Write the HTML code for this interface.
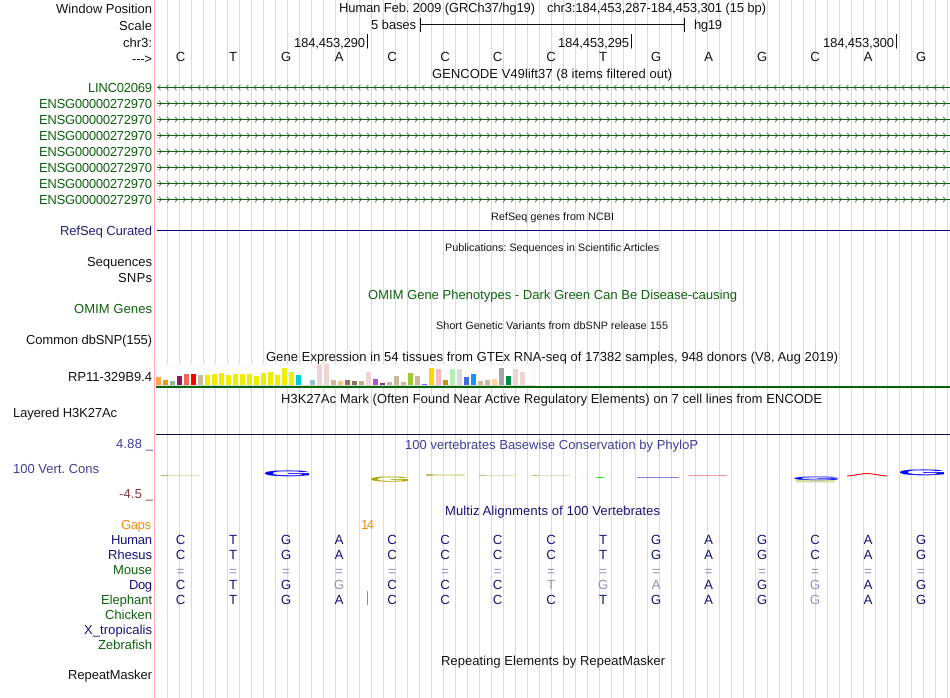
<!DOCTYPE html>
<html><head><meta charset="utf-8"><title>Genome Browser</title>
<style>
html,body{margin:0;padding:0;background:#fff;width:950px;height:698px;overflow:hidden}
svg{display:block}
text{font-family:"Liberation Sans",sans-serif;font-size:13px;fill:#111;text-rendering:geometricPrecision;filter:blur(.25px)}
.s{font-size:10.800px}
.g{fill:#0f620f}.n{fill:#10107a}.b{fill:#20207e}.p{fill:#40409a}
.bs{text-anchor:middle;font-size:13.200px}
.l{fill:#9292c2}
.eq{font-size:13.500px}
</style></head><body>
<svg width="950" height="698" viewBox="0 0 950 698" xmlns="http://www.w3.org/2000/svg">
<defs>
<pattern id="la" patternUnits="userSpaceOnUse" x="157" y="83" width="8" height="9"><path d="M3.500 1.800L1 4.500L3.500 7.200" fill="none" stroke="#0f640f" stroke-width=".8" opacity=".85"/></pattern>
<pattern id="ra" patternUnits="userSpaceOnUse" x="157" y="99" width="8" height="16"><path d="M2 1.800L4.500 4.500L2 7.200" fill="none" stroke="#0f640f" stroke-width=".8" opacity=".85"/></pattern>
</defs>
<rect width="950" height="698" fill="#fff"/>
<path d="M167.500 0V698M179.500 0V698M191.500 0V698M203.500 0V698M215.500 0V698M227.500 0V698M239.500 0V698M251.500 0V698M263.500 0V698M275.500 0V698M287.500 0V698M299.500 0V698M311.500 0V698M323.500 0V698M335.500 0V698M347.500 0V698M359.500 0V698M371.500 0V698M383.500 0V698M395.500 0V698M407.500 0V698M419.500 0V698M431.500 0V698M443.500 0V698M455.500 0V698M467.500 0V698M479.500 0V698M491.500 0V698M503.500 0V698M515.500 0V698M527.500 0V698M539.500 0V698M551.500 0V698M563.500 0V698M575.500 0V698M587.500 0V698M599.500 0V698M611.500 0V698M623.500 0V698M635.500 0V698M647.500 0V698M659.500 0V698M671.500 0V698M683.500 0V698M695.500 0V698M707.500 0V698M719.500 0V698M731.500 0V698M743.500 0V698M755.500 0V698M767.500 0V698M779.500 0V698M791.500 0V698M803.500 0V698M815.500 0V698M827.500 0V698M839.500 0V698M851.500 0V698M863.500 0V698M875.500 0V698M887.500 0V698M899.500 0V698M911.500 0V698M923.500 0V698M935.500 0V698M947.500 0V698" stroke="#d6d6fa" stroke-width="1" fill="none"/>
<rect x="154" y="0" width="1" height="698" fill="#ffaaaa"/>

<!-- header -->
<text x="56" y="13" textLength="96">Window Position</text>
<text x="119" y="30" textLength="33">Scale</text>
<text x="123" y="47" textLength="29">chr3:</text>
<text x="132" y="63" textLength="20">---&gt;</text>
<text x="339" y="12" textLength="196">Human Feb. 2009 (GRCh37/hg19)</text>
<text x="547" y="12" textLength="219">chr3:184,453,287-184,453,301 (15 bp)</text>
<text x="371" y="29" textLength="45">5 bases</text>
<text x="694" y="29" textLength="28">hg19</text>
<path d="M420.500 18V32M684.500 18V32M420 24.500H685" stroke="#111" stroke-width="1" fill="none"/>
<text x="294" y="47" textLength="71">184,453,290</text>
<text x="558" y="47" textLength="71">184,453,295</text>
<text x="823" y="47" textLength="71">184,453,300</text>
<path d="M367.500 34V48.500M631.500 34V48.500M896.500 34V48.500" stroke="#111" stroke-width="1"/>
<g>
<text class="bs" x="180.500" y="61">C</text><text class="bs" x="233" y="61">T</text><text class="bs" x="286" y="61">G</text><text class="bs" x="339" y="61">A</text><text class="bs" x="392" y="61">C</text><text class="bs" x="445" y="61">C</text><text class="bs" x="497.500" y="61">C</text><text class="bs" x="551" y="61">C</text><text class="bs" x="603" y="61">T</text><text class="bs" x="656" y="61">G</text><text class="bs" x="708.500" y="61">A</text><text class="bs" x="762" y="61">G</text><text class="bs" x="815" y="61">C</text><text class="bs" x="868" y="61">A</text><text class="bs" x="921" y="61">G</text>
</g>

<!-- GENCODE -->
<text x="432" y="78" textLength="240">GENCODE V49lift37 (8 items filtered out)</text>
<text class="g" x="88" y="92" textLength="64">LINC02069</text>
<text class="g" x="39" y="108" textLength="113">ENSG00000272970</text>
<text class="g" x="39" y="124" textLength="113">ENSG00000272970</text>
<text class="g" x="39" y="140" textLength="113">ENSG00000272970</text>
<text class="g" x="39" y="156" textLength="113">ENSG00000272970</text>
<text class="g" x="39" y="172" textLength="113">ENSG00000272970</text>
<text class="g" x="39" y="188" textLength="113">ENSG00000272970</text>
<text class="g" x="39" y="204" textLength="113">ENSG00000272970</text>
<rect x="157" y="83" width="793" height="9" fill="url(#la)"/>
<rect x="157" y="99" width="793" height="105" fill="url(#ra)"/>
<path d="M157 87.500H950M157 103.500H950M157 119.500H950M157 135.500H950M157 151.500H950M157 167.500H950M157 183.500H950M157 199.500H950" stroke="#0f640f" stroke-width="1"/>

<!-- middle -->
<text class="s" x="491" y="220" textLength="123">RefSeq genes from NCBI</text>
<text class="b" x="60" y="235" textLength="92">RefSeq Curated</text>
<rect x="157" y="230" width="793" height="1" fill="#000080"/>
<text class="s" x="445" y="251" textLength="214">Publications: Sequences in Scientific Articles</text>
<text x="87" y="266" textLength="65">Sequences</text>
<text x="118" y="282" textLength="34">SNPs</text>
<text class="g" x="368" y="299" textLength="369">OMIM Gene Phenotypes - Dark Green Can Be Disease-causing</text>
<text class="g" x="74" y="313" textLength="78">OMIM Genes</text>
<text class="s" x="436" y="329" textLength="232">Short Genetic Variants from dbSNP release 155</text>
<text x="26" y="344" textLength="126">Common dbSNP(155)</text>
<text x="266" y="361" textLength="572">Gene Expression in 54 tissues from GTEx RNA-seq of 17382 samples, 948 donors (V8, Aug 2019)</text>
<text x="68" y="381" textLength="84">RP11-329B9.4</text>

<!-- bars -->
<rect x="156.500" y="364.500" width="378" height="21" fill="#fff" stroke="#f5f5f5"/>
<rect x="156" y="385" width="379" height="1" fill="#d8d8d8"/>
<rect x="156" y="377" width="5" height="8" fill="#ffa54f"/><rect x="163" y="380" width="5" height="5" fill="#ee9a00"/><rect x="170" y="381" width="5" height="4" fill="#8fbc8f"/><rect x="177" y="376" width="5" height="9" fill="#8b1a62"/><rect x="184" y="374" width="5" height="11" fill="#ee6a50"/><rect x="191" y="374" width="5" height="11" fill="#ff0000"/><rect x="198" y="375" width="5" height="10" fill="#cdb79e"/>
<g fill="#eeee00"><rect x="205" y="375" width="5" height="10"/><rect x="212" y="374" width="5" height="11"/><rect x="219" y="373" width="5" height="12"/><rect x="226" y="375" width="5" height="10"/><rect x="233" y="374" width="5" height="11"/><rect x="240" y="374" width="5" height="11"/><rect x="247" y="374" width="5" height="11"/><rect x="254" y="376" width="5" height="9"/><rect x="261" y="373" width="5" height="12"/><rect x="268" y="372" width="5" height="13"/><rect x="275" y="375" width="5" height="10"/><rect x="282" y="368" width="5" height="17"/><rect x="289" y="372" width="5" height="13"/></g>
<rect x="296" y="375" width="5" height="10" fill="#00cdcd"/>
<rect x="310" y="380" width="5" height="5" fill="#9ac0cd"/><rect x="317" y="364" width="5" height="21" fill="#eed5d2"/><rect x="324" y="364" width="5" height="21" fill="#eed5d2"/><rect x="331" y="380" width="5" height="5" fill="#cdb79e"/><rect x="338" y="381" width="5" height="4" fill="#f4c28a"/><rect x="345" y="380" width="5" height="5" fill="#8b7355"/><rect x="352" y="381" width="5" height="4" fill="#8b7355"/><rect x="359" y="381" width="5" height="4" fill="#cdaa7d"/><rect x="366" y="372" width="5" height="13" fill="#eed5d2"/><rect x="373" y="379" width="5" height="6" fill="#b452cd"/><rect x="380" y="383" width="5" height="2" fill="#7a378b"/><rect x="387" y="382" width="5" height="3" fill="#cdb79e"/><rect x="394" y="376" width="5" height="9" fill="#cdb79e"/><rect x="401" y="382" width="5" height="3" fill="#cdb79e"/><rect x="408" y="373" width="5" height="12" fill="#9acd32"/><rect x="415" y="376" width="5" height="9" fill="#cdb79e"/><rect x="422" y="384" width="5" height="1" fill="#7a67ee"/><rect x="429" y="368" width="5" height="17" fill="#ffd700"/><rect x="436" y="369" width="5" height="16" fill="#ffb6c1"/><rect x="443" y="380" width="5" height="5" fill="#cd950c"/><rect x="450" y="369" width="5" height="16" fill="#b4eeb4"/><rect x="457" y="369" width="5" height="16" fill="#d9d9d9"/><rect x="464" y="377" width="5" height="8" fill="#4169e1"/><rect x="471" y="374" width="5" height="11" fill="#1e90ff"/><rect x="478" y="381" width="5" height="4" fill="#cdb79e"/><rect x="485" y="380" width="5" height="5" fill="#cdb79e"/><rect x="492" y="379" width="5" height="6" fill="#ffd39b"/><rect x="499" y="368" width="5" height="17" fill="#a6a6a6"/><rect x="506" y="376" width="5" height="9" fill="#008b45"/><rect x="513" y="369" width="5" height="16" fill="#eed5d2"/><rect x="520" y="372" width="5" height="13" fill="#eed5d2"/>
<rect x="156" y="386" width="794" height="2" fill="#006400"/>

<!-- H3K27Ac -->
<text x="281" y="403" textLength="541">H3K27Ac Mark (Often Found Near Active Regulatory Elements) on 7 cell lines from ENCODE</text>
<text x="13" y="417" textLength="104">Layered H3K27Ac</text>
<rect x="156" y="434" width="794" height="1" fill="#0a0a46"/>

<!-- conservation -->
<text class="p" x="116" y="448" textLength="37">4.88 _</text>
<text class="p" x="405" y="449" textLength="293">100 vertebrates Basewise Conservation by PhyloP</text>
<text class="p" x="13" y="473" textLength="86">100 Vert. Cons</text>
<text x="119" y="498" textLength="34" style="fill:#8b3a3a">-4.5 _</text>

<!-- logo faint strips -->
<g>
<rect x="161" y="475" width="38" height="1" fill="#dfdfb8"/><rect x="161" y="475" width="7" height="1" fill="#b5b560"/>
<rect x="426" y="474" width="39" height="2" fill="#e4e4b8"/><rect x="426" y="474" width="7" height="2" fill="#bcbc60"/>
<rect x="479" y="475" width="38" height="1" fill="#e2e2c0"/><rect x="479" y="475" width="7" height="1" fill="#bcbc70"/>
<rect x="532" y="475" width="39" height="1" fill="#e2e2c0"/><rect x="532" y="475" width="7" height="1" fill="#bcbc70"/>
<rect x="582" y="477" width="36" height="1" fill="#e6f8e6"/><rect x="597" y="477" width="6" height="1" fill="#00e000"/>
<rect x="637" y="477" width="42" height="1" fill="#8080e4"/>
<rect x="688" y="475" width="39" height="1" fill="#f29a9a"/>
<rect x="796" y="479.500" width="39" height="3" fill="#dcdca0"/>
<rect x="800" y="477" width="34" height="2" fill="#c0c8f4"/>
</g>
<!-- logo letters -->
<text transform="translate(262.600 476) scale(7.800 .95)" style="font-size:8.300px;fill:#0000ff;stroke:#0000ff;stroke-width:.25;filter:none">G</text>
<text transform="translate(369 481.300) scale(7.800 1)" style="font-size:7px;fill:#a8a800;stroke:#a8a800;stroke-width:.2;filter:none">G</text>
<text transform="translate(791.600 480) scale(7.800 .6)" style="font-size:8.300px;fill:#0000ff;stroke:#0000ff;stroke-width:.15;filter:none">G</text>
<path d="M847 476C857 475.500 860 473.500 867 473.500C874 473.500 877 475.500 887 476" fill="none" stroke="#ff0000" stroke-width="1"/>
<text transform="translate(897.600 475) scale(7.800 .95)" style="font-size:8.300px;fill:#0000ff;stroke:#0000ff;stroke-width:.25;filter:none">G</text>

<!-- multiz -->
<text class="n" x="445" y="515" textLength="215">Multiz Alignments of 100 Vertebrates</text>
<text x="121" y="529" textLength="30" style="fill:#ee8f10">Gaps</text>
<text x="361" y="529" textLength="13" style="fill:#ee8f10">14</text>
<text class="n" x="111" y="544" textLength="41">Human</text>
<text class="n" x="108" y="559" textLength="44">Rhesus</text>
<text class="g" x="113" y="574" textLength="39">Mouse</text>
<text class="n" x="129" y="589" textLength="23">Dog</text>
<text class="g" x="101" y="604" textLength="51">Elephant</text>
<text class="g" x="105" y="619" textLength="47">Chicken</text>
<text class="n" x="84" y="634" textLength="68">X_tropicalis</text>
<text class="g" x="98" y="649" textLength="54">Zebrafish</text>
<rect x="367" y="591" width="1" height="14" fill="#c8862a"/>

<g>
<text class="bs n" x="180.500" y="544">C</text><text class="bs n" x="233" y="544">T</text><text class="bs n" x="286" y="544">G</text><text class="bs n" x="339" y="544">A</text><text class="bs n" x="392" y="544">C</text><text class="bs n" x="445" y="544">C</text><text class="bs n" x="497.500" y="544">C</text><text class="bs n" x="551" y="544">C</text><text class="bs n" x="603" y="544">T</text><text class="bs n" x="656" y="544">G</text><text class="bs n" x="708.500" y="544">A</text><text class="bs n" x="762" y="544">G</text><text class="bs n" x="815" y="544">C</text><text class="bs n" x="868" y="544">A</text><text class="bs n" x="921" y="544">G</text>
<text class="bs n" x="180.500" y="559">C</text><text class="bs n" x="233" y="559">T</text><text class="bs n" x="286" y="559">G</text><text class="bs n" x="339" y="559">A</text><text class="bs n" x="392" y="559">C</text><text class="bs n" x="445" y="559">C</text><text class="bs n" x="497.500" y="559">C</text><text class="bs n" x="551" y="559">C</text><text class="bs n" x="603" y="559">T</text><text class="bs n" x="656" y="559">G</text><text class="bs n" x="708.500" y="559">A</text><text class="bs n" x="762" y="559">G</text><text class="bs n" x="815" y="559">C</text><text class="bs n" x="868" y="559">A</text><text class="bs n" x="921" y="559">G</text>
<text class="bs l eq" x="180.500" y="575.500">=</text><text class="bs l eq" x="233" y="575.500">=</text><text class="bs l eq" x="286" y="575.500">=</text><text class="bs l eq" x="339" y="575.500">=</text><text class="bs l eq" x="392" y="575.500">=</text><text class="bs l eq" x="445" y="575.500">=</text><text class="bs l eq" x="497.500" y="575.500">=</text><text class="bs l eq" x="551" y="575.500">=</text><text class="bs l eq" x="603" y="575.500">=</text><text class="bs l eq" x="656" y="575.500">=</text><text class="bs l eq" x="708.500" y="575.500">=</text><text class="bs l eq" x="762" y="575.500">=</text><text class="bs l eq" x="815" y="575.500">=</text><text class="bs l eq" x="868" y="575.500">=</text><text class="bs l eq" x="921" y="575.500">=</text>
<text class="bs n" x="180.500" y="589">C</text><text class="bs n" x="233" y="589">T</text><text class="bs n" x="286" y="589">G</text><text class="bs l" x="339" y="589">G</text><text class="bs n" x="392" y="589">C</text><text class="bs n" x="445" y="589">C</text><text class="bs n" x="497.500" y="589">C</text><text class="bs l" x="551" y="589">T</text><text class="bs l" x="603" y="589">G</text><text class="bs l" x="656" y="589">A</text><text class="bs n" x="708.500" y="589">A</text><text class="bs n" x="762" y="589">G</text><text class="bs l" x="815" y="589">G</text><text class="bs n" x="868" y="589">A</text><text class="bs n" x="921" y="589">G</text>
<text class="bs n" x="180.500" y="604">C</text><text class="bs n" x="233" y="604">T</text><text class="bs n" x="286" y="604">G</text><text class="bs n" x="339" y="604">A</text><text class="bs n" x="392" y="604">C</text><text class="bs n" x="445" y="604">C</text><text class="bs n" x="497.500" y="604">C</text><text class="bs n" x="551" y="604">C</text><text class="bs n" x="603" y="604">T</text><text class="bs n" x="656" y="604">G</text><text class="bs n" x="708.500" y="604">A</text><text class="bs n" x="762" y="604">G</text><text class="bs l" x="815" y="604">G</text><text class="bs n" x="868" y="604">A</text><text class="bs n" x="921" y="604">G</text>
</g>

<text x="441" y="665" textLength="224">Repeating Elements by RepeatMasker</text>
<text x="68" y="679" textLength="84">RepeatMasker</text>
</svg>
</body></html>
